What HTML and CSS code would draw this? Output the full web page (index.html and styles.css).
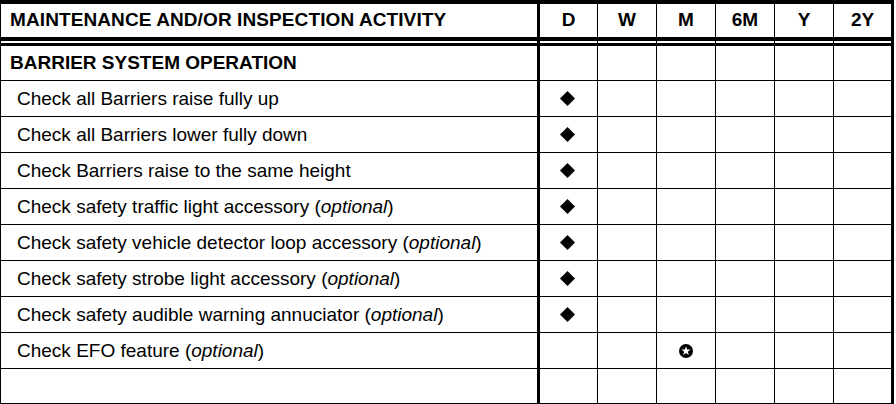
FILE: index.html
```html
<!DOCTYPE html>
<html>
<head>
<meta charset="utf-8">
<link rel="stylesheet" href="styles.css">
</head>
<body>
<table class="sched">
  <colgroup>
    <col class="c-act"><col class="c-d"><col class="c-f"><col class="c-f"><col class="c-f"><col class="c-f"><col class="c-last">
  </colgroup>
  <thead>
    <tr class="head">
      <th class="act">MAINTENANCE AND/OR INSPECTION ACTIVITY</th>
      <th>D</th><th>W</th><th>M</th><th>6M</th><th>Y</th><th class="last">2Y</th>
    </tr>
    <tr class="gap">
      <td class="act"></td><td></td><td></td><td></td><td></td><td></td><td class="last"></td>
    </tr>
  </thead>
  <tbody>
    <tr class="section">
      <td class="act">BARRIER SYSTEM OPERATION</td>
      <td></td><td></td><td></td><td></td><td></td><td class="last"></td>
    </tr>
    <tr>
      <td class="act item">Check all Barriers raise fully up</td>
      <td><svg class="dia" viewBox="0 0 14 14"><path d="M7 0L14 7L7 14L0 7Z"/></svg></td><td></td><td></td><td></td><td></td><td class="last"></td>
    </tr>
    <tr>
      <td class="act item">Check all Barriers lower fully down</td>
      <td><svg class="dia" viewBox="0 0 14 14"><path d="M7 0L14 7L7 14L0 7Z"/></svg></td><td></td><td></td><td></td><td></td><td class="last"></td>
    </tr>
    <tr>
      <td class="act item">Check Barriers raise to the same height</td>
      <td><svg class="dia" viewBox="0 0 14 14"><path d="M7 0L14 7L7 14L0 7Z"/></svg></td><td></td><td></td><td></td><td></td><td class="last"></td>
    </tr>
    <tr>
      <td class="act item">Check safety traffic light accessory (<i>optional</i>)</td>
      <td><svg class="dia" viewBox="0 0 14 14"><path d="M7 0L14 7L7 14L0 7Z"/></svg></td><td></td><td></td><td></td><td></td><td class="last"></td>
    </tr>
    <tr>
      <td class="act item">Check safety vehicle detector loop accessory (<i>optional</i>)</td>
      <td><svg class="dia" viewBox="0 0 14 14"><path d="M7 0L14 7L7 14L0 7Z"/></svg></td><td></td><td></td><td></td><td></td><td class="last"></td>
    </tr>
    <tr>
      <td class="act item">Check safety strobe light accessory (<i>optional</i>)</td>
      <td><svg class="dia" viewBox="0 0 14 14"><path d="M7 0L14 7L7 14L0 7Z"/></svg></td><td></td><td></td><td></td><td></td><td class="last"></td>
    </tr>
    <tr>
      <td class="act item">Check safety audible warning annuciator (<i>optional</i>)</td>
      <td><svg class="dia" viewBox="0 0 14 14"><path d="M7 0L14 7L7 14L0 7Z"/></svg></td><td></td><td></td><td></td><td></td><td class="last"></td>
    </tr>
    <tr>
      <td class="act item">Check EFO feature (<i>optional</i>)</td>
      <td></td><td></td>
      <td><svg class="star" viewBox="0 0 14 14"><circle cx="7" cy="7" r="7"/><path fill="#fff" d="M7 2.2L8.1 5.5L11.6 5.6L8.8 7.7L9.9 11.1L7 9.1L4.1 11.1L5.2 7.7L2.4 5.6L5.9 5.5Z"/></svg></td>
      <td></td><td></td><td class="last"></td>
    </tr>
    <tr class="end">
      <td class="act item"></td>
      <td></td><td></td><td></td><td></td><td></td><td class="last"></td>
    </tr>
  </tbody>
</table>
</body>
</html>
```
FILE: styles.css
```css
html, body {
  margin: 0;
  padding: 0;
  background: #fff;
}

.sched {
  border-collapse: separate;
  border-spacing: 0;
  table-layout: fixed;
  width: 894px;
  border-top: 4px solid #000;
  border-left: 1px solid #000;
  font-family: "Liberation Sans", Arial, sans-serif;
  font-size: 19px;
  color: #000;
}

.c-act { width: 539px; }
.c-d { width: 58px; }
.c-f { width: 59px; }
.c-last { width: 60px; }

.sched th,
.sched td {
  box-sizing: border-box;
  padding: 0;
  border-right: 1px solid #000;
  border-bottom: 1px solid #000;
  text-align: center;
  vertical-align: middle;
  line-height: 20px;
  white-space: nowrap;
}

.sched .act {
  border-right: 3px solid #000;
  text-align: left;
  padding-left: 9px;
}

.sched .last {
  border-right: 3px solid #000;
}

.head th {
  height: 37px;
  font-weight: bold;
  border-bottom: 4px solid #000;
  padding-bottom: 1px;
}

.head th.act {
  letter-spacing: 0.1px;
}

.gap td {
  height: 2px;
  border-bottom: 0;
  font-size: 0;
  line-height: 0;
}

.sched tbody tr td {
  height: 36px;
}

.sched tbody tr.section td {
  height: 38px;
  border-top: 3px solid #000;
  font-weight: bold;
}

.sched tbody tr.end td {
  height: 35px;
}

.sched .item {
  padding-left: 16px;
}

.dia {
  display: block;
  width: 15px;
  height: 15px;
  margin: 0 auto;
  fill: #000;
  position: relative;
  left: -1px;
}

.star {
  display: block;
  width: 14px;
  height: 14px;
  margin: 0 auto;
  fill: #000;
}
```
